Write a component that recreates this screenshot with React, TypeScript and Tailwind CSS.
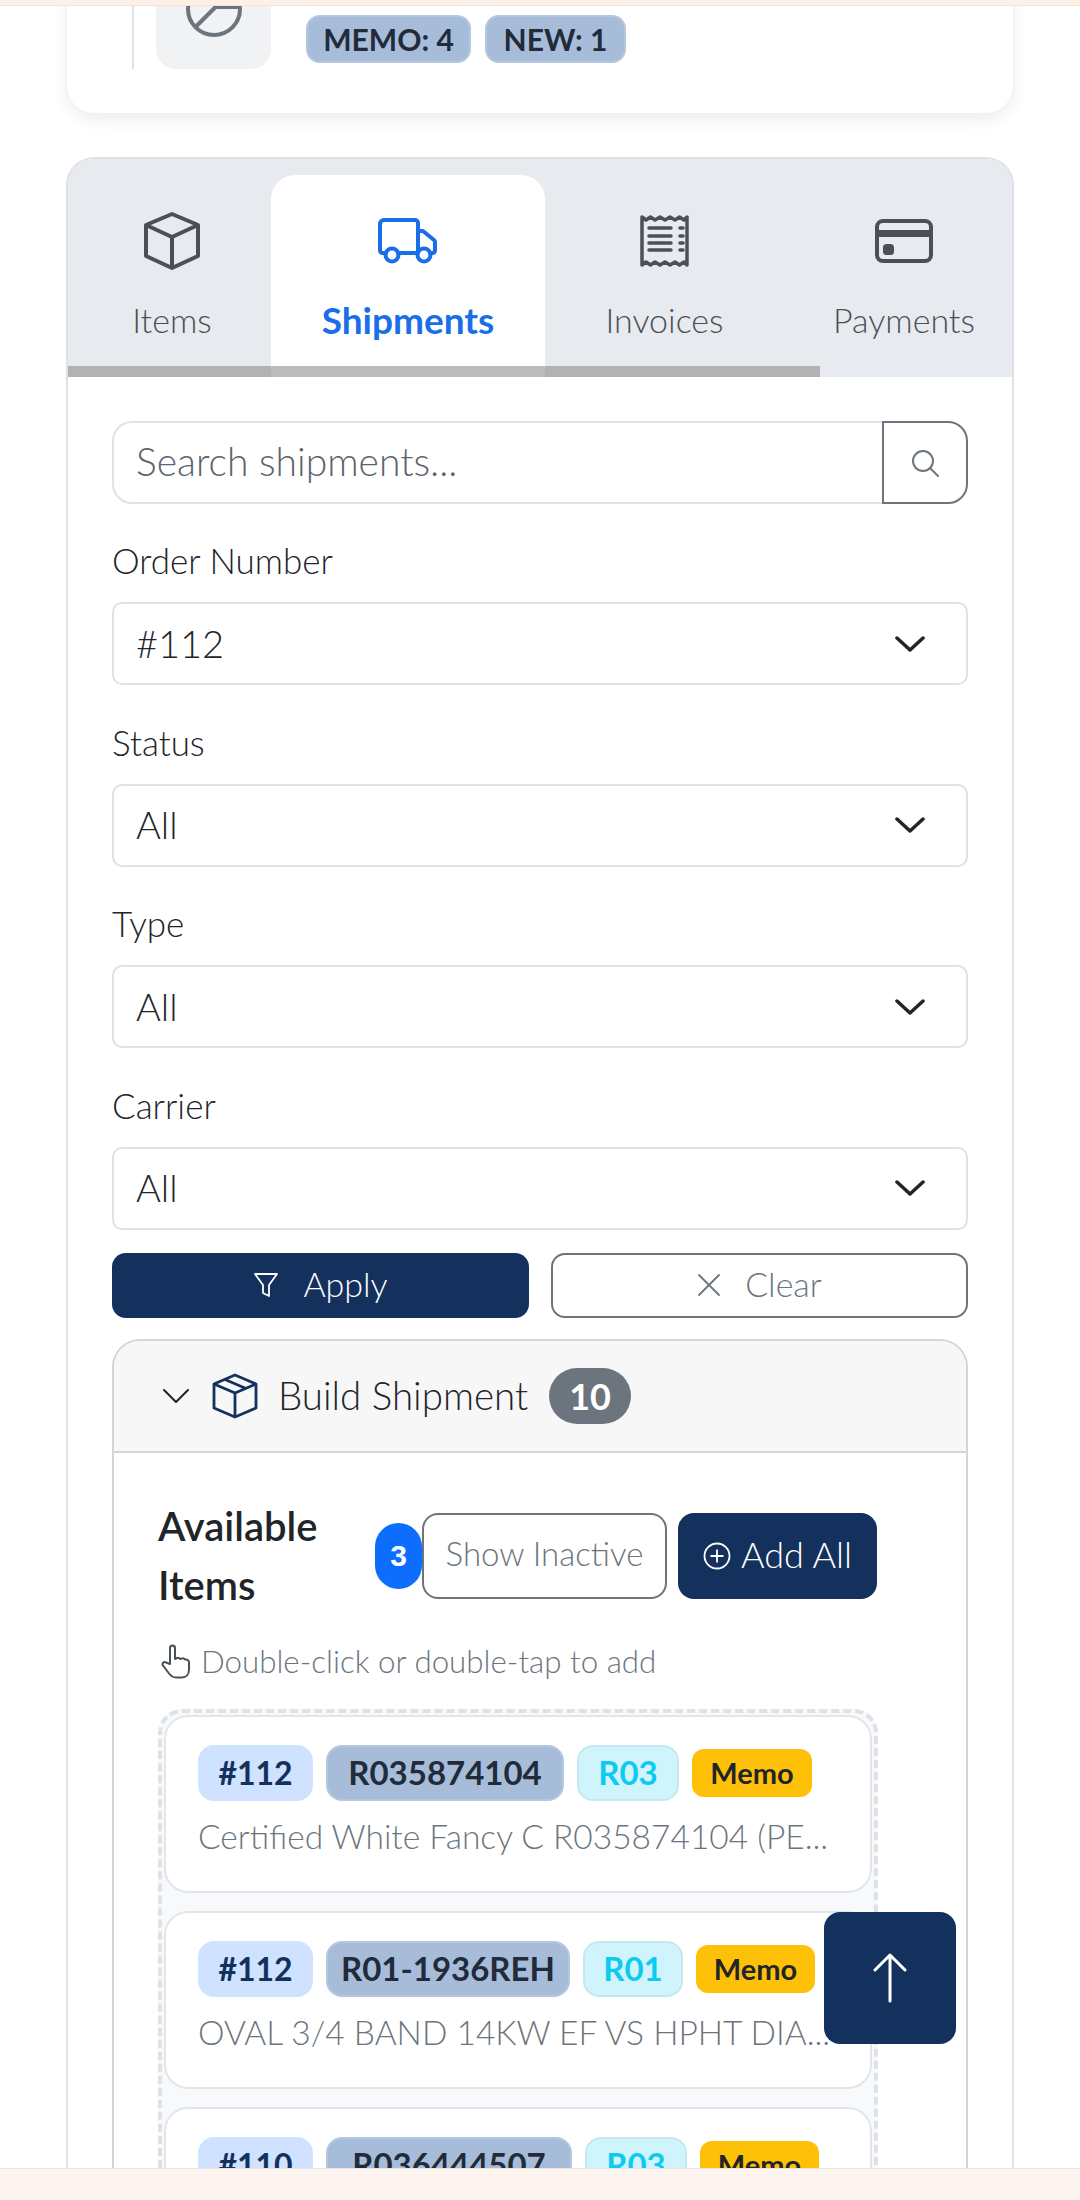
import React from 'react'

const font = { fontFamily: 'Lato, "Noto Sans", sans-serif' }

function CubeIcon() {
  return (
    <svg width="60" height="60" viewBox="0 0 60 60" fill="none" stroke="#495057" strokeWidth="4" strokeLinejoin="round">
      <path d="M30 3 56 14v31L30 57 4 45V14Z" />
      <path d="M4 14 30 26 56 14M30 26v31" />
    </svg>
  )
}

function TruckIcon() {
  return (
    <svg width="60" height="46" viewBox="0 0 60 46" fill="none" stroke="#1a6fe8" strokeWidth="4" strokeLinejoin="round" strokeLinecap="round">
      <path d="M8 35H4.500a2.500 2.500 0 0 1-2.500-2.500V6a4 4 0 0 1 4-4h31a3 3 0 0 1 3 3v30H20M40 13h5l11 9a3 3 0 0 1 1 2.500v8a2.500 2.500 0 0 1-2.500 2.500H52M40 35h0" />
      <circle cx="14" cy="37" r="6.500" />
      <circle cx="46" cy="37" r="6.500" />
    </svg>
  )
}

function ReceiptIcon() {
  return (
    <svg width="50" height="54" viewBox="0 0 50 54" fill="none" stroke="#495057" strokeLinecap="round" strokeLinejoin="round">
      <path strokeWidth="3.500" d="M2 3l4 3 4.500-3 4.500 3 5-3 5 3 5-3 5 3 4.500-3 4.500 3 3-3v48l-3-3-4.500 3-4.500-3-5 3-5-3-5 3-5-3-4.500 3-4.500-3-4 3Z" />
      <path strokeWidth="3.500" d="M9 14h22M9 22h22M9 29h22M9 36h22M40 14h3M40 22h3M40 29h3M40 36h3" />
    </svg>
  )
}

function CardIcon() {
  return (
    <svg width="58" height="44" viewBox="0 0 58 44" fill="none">
      <rect x="2" y="2" width="54" height="40" rx="6" stroke="#495057" strokeWidth="4" />
      <rect x="2" y="11" width="54" height="7" fill="#495057" />
      <rect x="8" y="25" width="11" height="11" rx="3.500" fill="#495057" />
    </svg>
  )
}

function Tab({ label, icon, active, width }: { label: string; icon: React.ReactNode; active?: boolean; width: string }) {
  return (
    <div
      className={`${width} shrink-0 h-[202px] flex flex-col items-center rounded-t-[24px] ${active ? 'bg-white text-[#1a6fe8] font-bold text-[37px]' : 'text-[#495057] font-light text-[34px]'}`}
    >
      <div className="h-[68px] mt-[32px] flex items-center justify-center">{icon}</div>
      <div className="leading-[40px] mt-[25px]">{label}</div>
    </div>
  )
}

function Chevron() {
  return (
    <svg width="30" height="18" viewBox="0 0 30 18" fill="none" stroke="#212529" strokeWidth="3.500" strokeLinecap="round" strokeLinejoin="round">
      <path d="M2 3 15 15 28 3" />
    </svg>
  )
}

function FilterSelect({ label, value }: { label: string; value: string }) {
  return (
    <div className="flex flex-col">
      <div className="text-[35px] leading-[36px] font-light text-[#212529] mb-[24px]">{label}</div>
      <div className="h-[83px] flex items-center justify-between pl-[22px] pr-[41px] border-2 border-[#dee2e6] rounded-[10px] bg-white">
        <span className="text-[38px] text-[#212529] font-light pb-[1px]">{value}</span>
        <Chevron />
      </div>
    </div>
  )
}

function Pill({ children, className }: { children: React.ReactNode; className: string }) {
  return (
    <span className={`h-[56px] flex items-center justify-center rounded-[16px] border-2 font-bold whitespace-nowrap ${className}`}>
      {children}
    </span>
  )
}

function ItemCard({ order, sku, code, desc, widths }: { order: string; sku: string; code: string; desc: string; widths: string[] }) {
  return (
    <div className="h-[178px] shrink-0 rounded-[24px] border-2 border-[#e2e6ea] bg-white px-[32px] pt-[28px]">
      <div className="flex items-center gap-[13px]">
        <Pill className={`${widths[0]} text-[32px] bg-[#cfe2ff] border-[#cfe2ff] text-[#14305c]`}>{order}</Pill>
        <Pill className={`${widths[1]} text-[33px] bg-[#a6bcd9] border-[#b4c7df] text-[#212b3a]`}>{sku}</Pill>
        <Pill className={`${widths[2]} text-[33px] bg-[#cff4fc] border-[#c4e8f0] text-[#0dcaf0]`}>{code}</Pill>
        <span className={`${widths[3]} h-[48px] flex items-center justify-center rounded-[12px] bg-[#ffc107] text-[#212529] text-[29px] font-bold`}>Memo</span>
      </div>
      <div className="mt-[12px] text-[33.500px] leading-[46px] font-light text-[#6c757d] whitespace-nowrap">{desc}</div>
    </div>
  )
}

export default function App() {
  return (
    <div className="relative w-[1080px] h-[2200px] overflow-hidden bg-white" style={font}>
      {/* Top summary card, scrolled mostly out of view */}
      <div className="-mt-[40px] mx-[66px] h-[154px] rounded-b-[28px] bg-white shadow-[0_6px_16px_rgba(0,0,0,0.07)] border border-[#f1f1f1] pl-[65px] flex">
        <div className="h-[108px] border-l-2 border-[#dee2e6] pl-[22px] flex gap-[35px]">
          <div className="w-[115px] h-[108px] rounded-b-[20px] bg-[#f0f2f4] flex justify-center items-end pb-[31px]">
            <svg width="58" height="58" viewBox="0 0 58 58" fill="none" stroke="#6c757d" strokeWidth="4">
              <circle cx="29" cy="29" r="26" />
              <path d="M10.500 47 30.500 27H55.500" />
            </svg>
          </div>
          <div className="flex gap-[14px] mt-[54px]">
            <span className="w-[165px] h-[48px] flex items-center justify-center rounded-[14px] bg-[#a6bcd9] border-2 border-[#b4c7df] text-[#212b3a] text-[30px] font-bold">MEMO: 4</span>
            <span className="w-[141px] h-[48px] flex items-center justify-center rounded-[14px] bg-[#a6bcd9] border-2 border-[#b4c7df] text-[#212b3a] text-[30px] font-bold">NEW: 1</span>
          </div>
        </div>
      </div>

      {/* Tabs card */}
      <div className="mt-[43px] mx-[66px] rounded-t-[28px] border-x-2 border-t-2 border-[#dee2e6] h-[2100px]">
        <div className="relative h-[218px] bg-[#e7eaee] rounded-t-[26px] flex items-end overflow-hidden">
          <Tab label="Items" icon={<CubeIcon />} width="w-[203px] pl-[5px]" />
          <Tab label="Shipments" icon={<TruckIcon />} active width="w-[274px]" />
          <Tab label="Invoices" icon={<ReceiptIcon />} width="w-[239px]" />
          <Tab label="Payments" icon={<CardIcon />} width="w-[240px]" />
          <div className="absolute left-0 bottom-0 w-[752px] h-[11px] bg-[#7a7a7a]/50" />
        </div>

        <div className="px-[44px] pt-[44px] flex flex-col">
          {/* Search */}
          <div className="flex h-[83px]">
            <div className="flex-1 flex items-center pl-[22px] pb-[3px] border-2 border-r-0 border-[#dee2e6] rounded-l-[20px] text-[39px] font-light text-[#5c636a]">
              Search shipments...
            </div>
            <div className="w-[86px] flex items-center justify-center border-2 border-[#6c757d] rounded-r-[20px]">
              <svg width="30" height="30" viewBox="0 0 30 30" fill="none" stroke="#6c757d" strokeWidth="2">
                <circle cx="13" cy="13" r="10" />
                <path d="m20 20 8 8" strokeLinecap="round" />
              </svg>
            </div>
          </div>

          <div className="mt-[38px] flex flex-col gap-[38.500px]">
            <FilterSelect label="Order Number" value="#112" />
            <FilterSelect label="Status" value="All" />
            <FilterSelect label="Type" value="All" />
            <FilterSelect label="Carrier" value="All" />
          </div>

          {/* Apply / Clear */}
          <div className="mt-[23px] grid grid-cols-2 gap-[22px]">
            <div className="h-[65px] flex items-center justify-center gap-[24px] pb-[3px] rounded-[14px] bg-[#14305c] text-white text-[34px] font-light">
              <svg className="mt-[3px]" width="26" height="28" viewBox="0 0 26 28" fill="none" stroke="white" strokeWidth="1.800" strokeLinejoin="round">
                <path d="M2 3h22l-8 11v11l-6-3v-8Z" />
              </svg>
              Apply
            </div>
            <div className="h-[65px] flex items-center justify-center gap-[24px] pb-[3px] rounded-[14px] border-2 border-[#6c757d] text-[#6c757d] text-[34px] font-light">
              <svg className="mt-[3px]" width="24" height="24" viewBox="0 0 24 24" fill="none" stroke="#6c757d" strokeWidth="1.800" strokeLinecap="round">
                <path d="m2 2 20 20M22 2 2 22" />
              </svg>
              Clear
            </div>
          </div>

          {/* Build Shipment accordion */}
          <div className="mt-[21px] rounded-t-[28px] border-x-2 border-t-2 border-[#d3d5d7] h-[1000px]">
            <div className="h-[112px] bg-[#f7f7f8] rounded-t-[26px] border-b-2 border-[#d3d5d7] flex items-center pl-[49px]">
              <svg width="26" height="16" viewBox="0 0 26 16" fill="none" stroke="#212529" strokeWidth="2" strokeLinecap="round" strokeLinejoin="round">
                <path d="M1 2 13 14 25 2" />
              </svg>
              <svg className="ml-[23px]" width="46" height="46" viewBox="0 0 46 46" fill="none" stroke="#14305c" strokeWidth="2.800" strokeLinejoin="round">
                <path d="M23 2 44 11v24L23 44 2 35V11Z" />
                <path d="M2 11 23 20 44 11M23 20v24M13 6.500 34 15.500" />
              </svg>
              <span className="ml-[20px] text-[38.500px] font-light text-[#212529]">Build Shipment</span>
              <span className="ml-[21px] w-[82px] h-[56px] rounded-full bg-[#6c757d] text-white font-bold text-[36px] flex items-center justify-center">10</span>
            </div>

            <div className="pt-[59px] pl-[44px]">
              <div className="flex items-center h-[88px]">
                <div className="w-[217px] text-[40px] leading-[59px] font-semibold text-[#212529]">Available Items</div>
                <span className="w-[47px] h-[66px] rounded-full bg-[#0d6efd] text-white text-[30px] font-bold flex items-center justify-center" style={{ fontFamily: '"Liberation Sans", sans-serif' }}>3</span>
                <span className="w-[245px] h-[86px] pb-[3px] rounded-[16px] border-2 border-[#6c757d] flex items-center justify-center text-[33px] font-light text-[#6c757d]">Show Inactive</span>
                <span className="ml-[11px] w-[199px] h-[86px] pb-[3px] rounded-[16px] bg-[#14305c] text-white text-[36px] font-light flex items-center justify-center gap-[10px]">
                  <svg className="mt-[3px]" width="28" height="28" viewBox="0 0 28 28" fill="none" stroke="white" strokeWidth="1.800">
                    <circle cx="14" cy="14" r="12.500" />
                    <path d="M14 7.500v13M7.500 14h13" />
                  </svg>
                  Add All
                </span>
              </div>

              <div className="mt-[41px] pl-[3px] flex items-center gap-[10px] text-[31.300px] leading-[40px] font-light text-[#6c757d]">
                <svg width="30" height="36" viewBox="0 0 30 36" fill="none" stroke="#495057" strokeWidth="2" strokeLinejoin="round" strokeLinecap="round">
                  <path d="M9 21V5a2.500 2.500 0 0 1 5 0v11l2-1a2.500 2.500 0 0 1 3 1l2-.500a2.500 2.500 0 0 1 3 1l1 0a3 3 0 0 1 3 3v7c0 5-3 8-7 8h-6c-3 0-5-1.500-7-4l-6-8c-1.500-2 1-4.500 3-3Z" />
                </svg>
                Double-click or double-tap to add
              </div>

              {/* Drop zone */}
              <div className="mt-[28px] w-[720px] border-4 border-dashed border-[#dee2e6] rounded-[24px] bg-[#f8f9fa] p-[2px] flex flex-col gap-[18px]">
                <ItemCard order="#112" sku="R035874104" code="R03" desc="Certified White Fancy C R035874104 (PE..." widths={['w-[115px]', 'w-[238px]', 'w-[102px]', 'w-[120px]']} />
                <ItemCard order="#112" sku="R01-1936REH" code="R01" desc="OVAL 3/4 BAND 14KW EF VS HPHT DIA..." widths={['w-[115px]', 'w-[244px]', 'w-[100px]', 'w-[119px]']} />
                <ItemCard order="#110" sku="R036444507" code="R03" desc="" widths={['w-[115px]', 'w-[246px]', 'w-[102px]', 'w-[119px]']} />
              </div>
            </div>
          </div>
        </div>
      </div>

      {/* Page edges */}
      <div className="absolute top-0 left-0 right-0 h-[6px] bg-[#fdf0e6] border-b border-[#f5e3d8]" />
      <div className="absolute bottom-0 left-0 right-0 h-[32px] bg-[#fff5f0] border-t border-[#ece6e3]" />

      {/* Back to top */}
      <div className="absolute left-[824px] top-[1912px] w-[132px] h-[132px] rounded-[16px] bg-[#14305c] flex items-center justify-center">
        <svg width="34" height="50" viewBox="0 0 34 50" fill="none" stroke="white" strokeWidth="3" strokeLinecap="round" strokeLinejoin="round">
          <path d="M17 48V2M2 17 17 2 32 17" />
        </svg>
      </div>
    </div>
  )
}
